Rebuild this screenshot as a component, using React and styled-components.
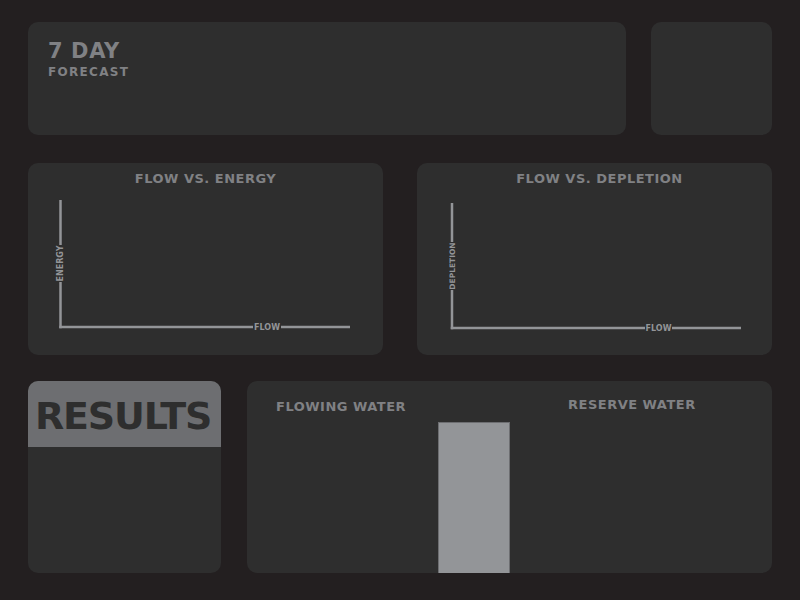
import styled, { createGlobalStyle } from 'styled-components';

const GlobalStyle = createGlobalStyle`
  html, body {
    margin: 0;
    padding: 0;
    background: #231f20;
  }
  body {
    font-family: 'DejaVu Sans', 'Liberation Sans', sans-serif;
  }
`;

const Page = styled.div`
  width: 800px;
  height: 600px;
  box-sizing: border-box;
  padding: 22px 28px 27px;
  display: flex;
  flex-direction: column;
  background: #231f20;
`;

const Row = styled.div`
  display: grid;
  grid-template-columns: ${(p) => p.$cols};
  gap: ${(p) => p.$gap}px;
  height: ${(p) => p.$height}px;
  margin-bottom: ${(p) => p.$after || 0}px;
`;

const Panel = styled.div`
  background: #2e2e2e;
  border-radius: 10px;
  overflow: hidden;
`;

const ForecastPanel = styled(Panel)`
  padding: 19px 19px 0 20px;
`;

const BigLabel = styled.div`
  color: #808184;
  font-weight: bold;
  font-size: 21px;
  line-height: 20px;
  letter-spacing: 0.6px;
`;

const SmallLabel = styled.div`
  color: #808184;
  font-weight: bold;
  font-size: 12px;
  line-height: 12px;
  letter-spacing: 1.3px;
  margin-top: 5px;
`;

const ChartPanel = styled(Panel)`
  display: flex;
  flex-direction: column;
`;

const ChartTitle = styled.h3`
  margin: 0;
  padding: 8px 0 0 ${(p) => p.$shift || 0}px;
  height: 16px;
  line-height: 16px;
  text-align: center;
  color: #808184;
  font-size: 13px;
  font-weight: bold;
  letter-spacing: 0.5px;
`;

const ChartSvg = styled.svg`
  display: block;
  flex: 1;
  width: 100%;
`;

const AxisText = styled.text`
  fill: #939598;
  font-family: 'DejaVu Sans', sans-serif;
  font-weight: bold;
  font-size: ${(p) => p.$size}px;
`;

const ResultsPanel = styled(Panel)`
  display: flex;
  flex-direction: column;
`;

const ResultsHeader = styled.div`
  background: #6d6e71;
  height: 66px;
  box-sizing: border-box;
  padding: 16px 0 0 7px;
`;

const ResultsTitle = styled.h2`
  margin: 0;
  color: #2e2e2e;
  font-size: 38px;
  line-height: 38px;
  font-weight: bold;
  letter-spacing: -1.2px;
`;

const WaterPanel = styled(Panel)`
  display: grid;
  grid-template-columns: 191px 72px 1fr;
`;

const WaterColumn = styled.div`
  padding: ${(p) => p.$top}px 0 0 ${(p) => p.$left}px;
  display: flex;
  flex-direction: column;
`;

const WaterTitle = styled.div`
  color: #808184;
  font-size: 13px;
  line-height: 16px;
  font-weight: bold;
  letter-spacing: 0.5px;
  white-space: nowrap;
`;

const Bar = styled.div`
  flex: 1;
  background: #939598;
  border: 1px solid #6d6e71;
  border-bottom: none;
`;

function AxisChart({ title, shift, vx, vTop, gapTop, gapBottom, hy, hEnd, flowStart, flowEnd, yLabel, ySize }) {
  const stroke = '#939598';
  const mid = (gapTop + gapBottom) / 2;
  return (
    <ChartPanel>
      <ChartTitle $shift={shift}>{title}</ChartTitle>
      <ChartSvg viewBox="0 24 355 168">
        <line x1={vx} y1={vTop} x2={vx} y2={gapTop} stroke={stroke} strokeWidth="2.5" />
        <line x1={vx} y1={gapBottom} x2={vx} y2={hy + 1.25} stroke={stroke} strokeWidth="2.5" />
        <line x1={vx - 1.25} y1={hy} x2={flowStart} y2={hy} stroke={stroke} strokeWidth="2.5" />
        <line x1={flowEnd} y1={hy} x2={hEnd} y2={hy} stroke={stroke} strokeWidth="2.5" />
        <AxisText
          $size={ySize}
          x={vx}
          y={mid}
          textAnchor="middle"
          dominantBaseline="central"
          transform={`rotate(-90 ${vx} ${mid})`}
        >
          {yLabel}
        </AxisText>
        <AxisText
          $size={8}
          x={(flowStart + flowEnd) / 2}
          y={hy}
          textAnchor="middle"
          dominantBaseline="central"
        >
          FLOW
        </AxisText>
      </ChartSvg>
    </ChartPanel>
  );
}

export default function App() {
  return (
    <>
      <GlobalStyle />
      <Page>
        <Row $cols="1fr 121px" $gap={25} $height={113} $after={28}>
          <ForecastPanel>
            <BigLabel>7 DAY</BigLabel>
            <SmallLabel>FORECAST</SmallLabel>
          </ForecastPanel>
          <Panel />
        </Row>

        <Row $cols="1fr 1fr" $gap={34} $height={192} $after={26}>
          <AxisChart
            title="FLOW VS. ENERGY"
            vx={32.5}
            vTop={37}
            gapTop={82}
            gapBottom={119}
            hy={164}
            hEnd={322}
            flowStart={225}
            flowEnd={253}
            yLabel="ENERGY"
            ySize={8}
          />
          <AxisChart
            title="FLOW VS. DEPLETION"
            shift={10}
            vx={35}
            vTop={40}
            gapTop={79}
            gapBottom={127}
            hy={165}
            hEnd={324}
            flowStart={228}
            flowEnd={255}
            yLabel="DEPLETION"
            ySize={7.5}
          />
        </Row>

        <Row $cols="193px 1fr" $gap={26} $height={192}>
          <ResultsPanel>
            <ResultsHeader>
              <ResultsTitle>RESULTS</ResultsTitle>
            </ResultsHeader>
          </ResultsPanel>
          <WaterPanel>
            <WaterColumn $top={18} $left={29}>
              <WaterTitle>FLOWING WATER</WaterTitle>
            </WaterColumn>
            <WaterColumn $top={41} $left={0}>
              <Bar />
            </WaterColumn>
            <WaterColumn $top={16} $left={58}>
              <WaterTitle>RESERVE WATER</WaterTitle>
            </WaterColumn>
          </WaterPanel>
        </Row>
      </Page>
    </>
  );
}
